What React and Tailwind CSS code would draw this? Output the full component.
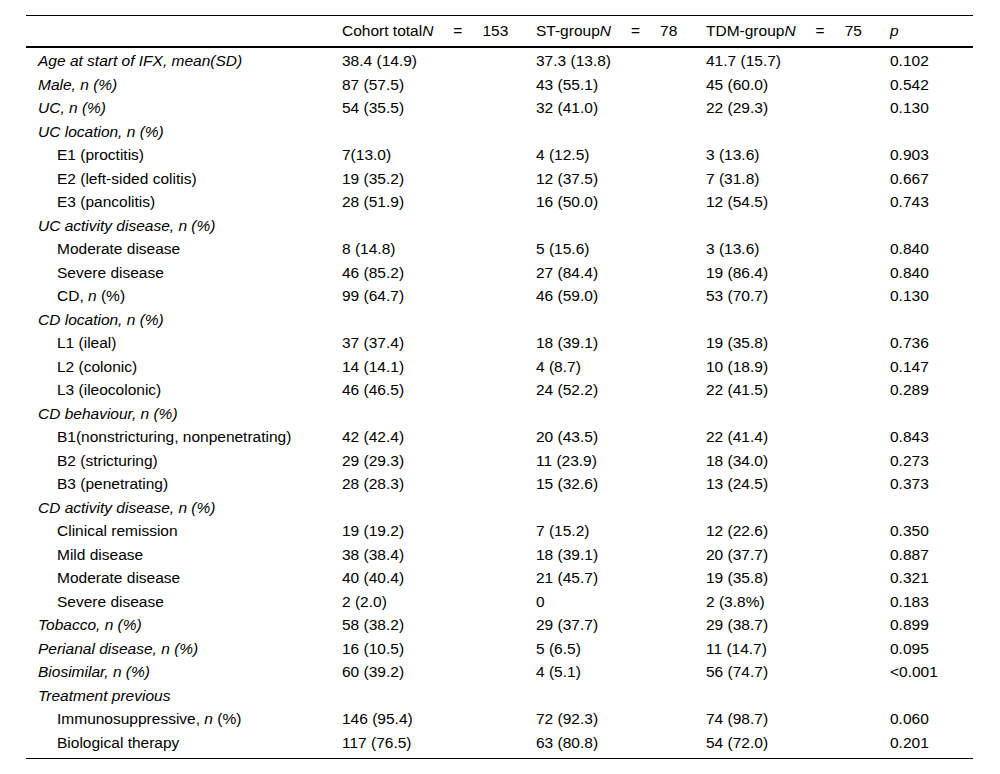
const rows = [
  { label: "Age at start of IFX, mean(SD)", head: true, v: ["38.4 (14.9)", "37.3 (13.8)", "41.7 (15.7)", "0.102"] },
  { label: "Male, n (%)", head: true, v: ["87 (57.5)", "43 (55.1)", "45 (60.0)", "0.542"] },
  { label: "UC, n (%)", head: true, v: ["54 (35.5)", "32 (41.0)", "22 (29.3)", "0.130"] },
  { label: "UC location, n (%)", head: true },
  { label: "E1 (proctitis)", v: ["7(13.0)", "4 (12.5)", "3 (13.6)", "0.903"] },
  { label: "E2 (left-sided colitis)", v: ["19 (35.2)", "12 (37.5)", "7 (31.8)", "0.667"] },
  { label: "E3 (pancolitis)", v: ["28 (51.9)", "16 (50.0)", "12 (54.5)", "0.743"] },
  { label: "UC activity disease, n (%)", head: true },
  { label: "Moderate disease", v: ["8 (14.8)", "5 (15.6)", "3 (13.6)", "0.840"] },
  { label: "Severe disease", v: ["46 (85.2)", "27 (84.4)", "19 (86.4)", "0.840"] },
  { label: "CD", n: true, v: ["99 (64.7)", "46 (59.0)", "53 (70.7)", "0.130"] },
  { label: "CD location, n (%)", head: true },
  { label: "L1 (ileal)", v: ["37 (37.4)", "18 (39.1)", "19 (35.8)", "0.736"] },
  { label: "L2 (colonic)", v: ["14 (14.1)", "4 (8.7)", "10 (18.9)", "0.147"] },
  { label: "L3 (ileocolonic)", v: ["46 (46.5)", "24 (52.2)", "22 (41.5)", "0.289"] },
  { label: "CD behaviour, n (%)", head: true },
  { label: "B1(nonstricturing, nonpenetrating)", v: ["42 (42.4)", "20 (43.5)", "22 (41.4)", "0.843"] },
  { label: "B2 (stricturing)", v: ["29 (29.3)", "11 (23.9)", "18 (34.0)", "0.273"] },
  { label: "B3 (penetrating)", v: ["28 (28.3)", "15 (32.6)", "13 (24.5)", "0.373"] },
  { label: "CD activity disease, n (%)", head: true },
  { label: "Clinical remission", v: ["19 (19.2)", "7 (15.2)", "12 (22.6)", "0.350"] },
  { label: "Mild disease", v: ["38 (38.4)", "18 (39.1)", "20 (37.7)", "0.887"] },
  { label: "Moderate disease", v: ["40 (40.4)", "21 (45.7)", "19 (35.8)", "0.321"] },
  { label: "Severe disease", v: ["2 (2.0)", "0", "2 (3.8%)", "0.183"] },
  { label: "Tobacco, n (%)", head: true, v: ["58 (38.2)", "29 (37.7)", "29 (38.7)", "0.899"] },
  { label: "Perianal disease, n (%)", head: true, v: ["16 (10.5)", "5 (6.5)", "11 (14.7)", "0.095"] },
  { label: "Biosimilar, n (%)", head: true, v: ["60 (39.2)", "4 (5.1)", "56 (74.7)", "<0.001"] },
  { label: "Treatment previous", head: true },
  { label: "Immunosuppressive", n: true, v: ["146 (95.4)", "72 (92.3)", "74 (98.7)", "0.060"] },
  { label: "Biological therapy", v: ["117 (76.5)", "63 (80.8)", "54 (72.0)", "0.201"] },
];

const cols = "grid grid-cols-[304px_194px_170px_184px_95px]";

function GroupHead({ name, n }) {
  return (
    <div className="pl-3 whitespace-nowrap">
      {name}
      <i>N</i>
      <span className="px-[20px]">=</span>
      {n}
    </div>
  );
}

export default function App() {
  return (
    <div className="min-h-screen bg-white pt-[15px] text-[15.5px] text-black" style={{ fontFamily: '"Liberation Sans", Arial, sans-serif' }}>
      <div className="ml-[26px] w-[947px] border-t border-b border-black pb-[4px]">
        <div className={`${cols} h-[32px] items-center border-b-2 border-black`}>
          <div />
          <GroupHead name="Cohort total" n="153" />
          <GroupHead name="ST-group" n="78" />
          <GroupHead name="TDM-group" n="75" />
          <div className="pl-3 italic">p</div>
        </div>
        <div className="pt-px">
          {rows.map((r, i) => (
            <div key={i} className={`${cols} h-[23.5px] items-center`}>
              {r.head ? (
                <div className="pl-3 italic whitespace-nowrap">{r.label}</div>
              ) : r.n ? (
                <div className="pl-[31px]">
                  {r.label}, <i>n</i> (%)
                </div>
              ) : (
                <div className="pl-[31px] whitespace-nowrap">{r.label}</div>
              )}
              {(r.v || ["", "", "", ""]).map((c, j) => (
                <div key={j} className="pl-3">
                  {c}
                </div>
              ))}
            </div>
          ))}
        </div>
      </div>
    </div>
  );
}
